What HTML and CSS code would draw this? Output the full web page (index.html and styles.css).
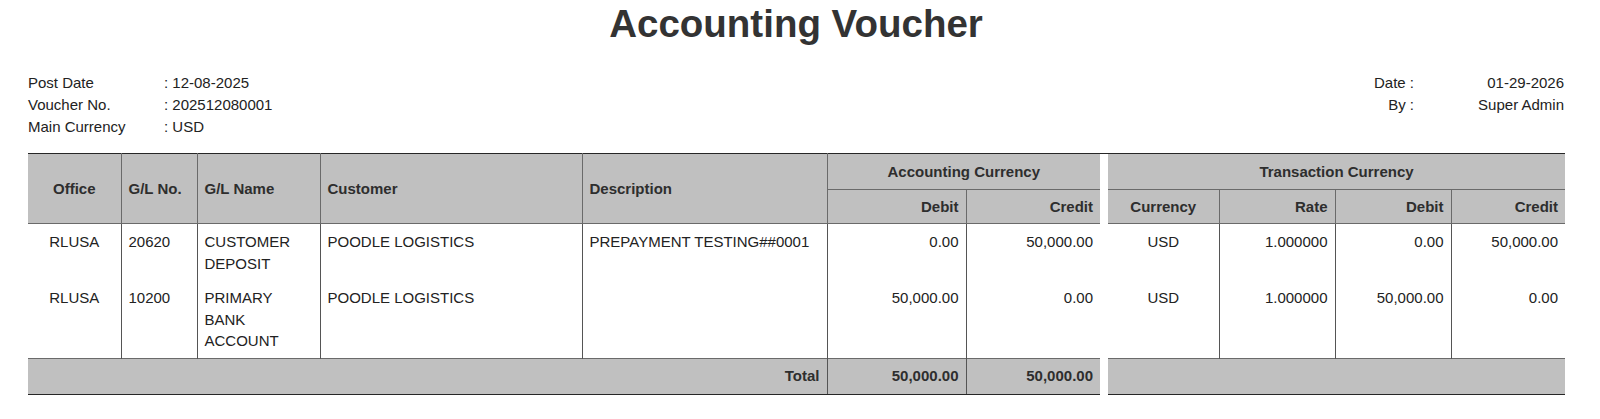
FILE: index.html
```html
<!DOCTYPE html>
<html lang="en">
<head>
<meta charset="utf-8">
<title>Accounting Voucher</title>
<link rel="stylesheet" href="styles.css">
</head>
<body>
<div class="page">
  <h1 class="title">Accounting Voucher</h1>
  <div class="info">
    <div class="info-left">
      <span class="lbl">Post Date</span><span class="val">: 12-08-2025</span>
      <span class="lbl">Voucher No.</span><span class="val">: 202512080001</span>
      <span class="lbl">Main Currency</span><span class="val">: USD</span>
    </div>
    <div class="info-right">
      <span class="rlbl">Date :</span><span class="rval">01-29-2026</span>
      <span class="rlbl">By :</span><span class="rval">Super Admin</span>
    </div>
  </div>
  <table class="voucher">
    <colgroup>
      <col class="c-office"><col class="c-glno"><col class="c-glname"><col class="c-cust"><col class="c-desc"><col class="c-adebit"><col class="c-acredit">
      <col class="c-gap">
      <col class="c-cur"><col class="c-rate"><col class="c-tdebit"><col class="c-tcredit">
    </colgroup>
    <thead>
      <tr class="hrow1">
        <th rowspan="2" class="center">Office</th>
        <th rowspan="2" class="left">G/L No.</th>
        <th rowspan="2" class="left">G/L Name</th>
        <th rowspan="2" class="left">Customer</th>
        <th rowspan="2" class="left">Description</th>
        <th colspan="2" class="center group last">Accounting Currency</th>
        <th rowspan="2" class="gap"></th>
        <th colspan="4" class="center group first last">Transaction Currency</th>
      </tr>
      <tr class="hrow2">
        <th class="right">Debit</th>
        <th class="right last">Credit</th>
        <th class="center first">Currency</th>
        <th class="right">Rate</th>
        <th class="right">Debit</th>
        <th class="right last">Credit</th>
      </tr>
    </thead>
    <tbody>
      <tr>
        <td class="center">RLUSA</td>
        <td>20620</td>
        <td>CUSTOMER<br>DEPOSIT</td>
        <td>POODLE LOGISTICS</td>
        <td>PREPAYMENT TESTING##0001</td>
        <td class="right">0.00</td>
        <td class="right last">50,000.00</td>
        <td class="gap"></td>
        <td class="center first">USD</td>
        <td class="right">1.000000</td>
        <td class="right">0.00</td>
        <td class="right last">50,000.00</td>
      </tr>
      <tr>
        <td class="center">RLUSA</td>
        <td>10200</td>
        <td>PRIMARY<br>BANK<br>ACCOUNT</td>
        <td>POODLE LOGISTICS</td>
        <td></td>
        <td class="right">50,000.00</td>
        <td class="right last">0.00</td>
        <td class="gap"></td>
        <td class="center first">USD</td>
        <td class="right">1.000000</td>
        <td class="right">50,000.00</td>
        <td class="right last">0.00</td>
      </tr>
    </tbody>
    <tfoot>
      <tr>
        <td colspan="5" class="right">Total</td>
        <td class="right">50,000.00</td>
        <td class="right last">50,000.00</td>
        <td class="gap"></td>
        <td colspan="4" class="first last"></td>
      </tr>
    </tfoot>
  </table>
</div>
</body>
</html>
```

FILE: styles.css
```css
html, body {
  margin: 0;
  padding: 0;
  background: #ffffff;
}

body {
  font-family: "Liberation Sans", Arial, sans-serif;
  color: #222222;
  font-size: 15px;
}

.page {
  width: 1536px;
  padding: 2px 0 0 28px;
}

.title {
  margin: 0;
  font-size: 38.5px;
  font-weight: bold;
  color: #333333;
  text-align: center;
  line-height: 43px;
}

.info {
  display: flex;
  justify-content: space-between;
  align-items: flex-start;
  margin-top: 27px;
  line-height: 22px;
}

.info-left {
  display: grid;
  grid-template-columns: 136px auto;
}

.info-right {
  display: grid;
  grid-template-columns: auto 150px;
}

.rlbl,
.rval {
  text-align: right;
}

.voucher {
  margin-top: 15px;
  width: 1537px;
  table-layout: fixed;
  border-collapse: collapse;
  line-height: 21.5px;
}

.c-office { width: 93px; }
.c-glno { width: 76px; }
.c-glname { width: 123px; }
.c-cust { width: 262px; }
.c-desc { width: 245px; }
.c-adebit { width: 139px; }
.c-acredit { width: 134px; }
.c-gap { width: 8px; }
.c-cur { width: 111px; }
.c-rate { width: 116px; }
.c-tdebit { width: 116px; }
.c-tcredit { width: 114px; }

.voucher th {
  background: #c0c0c0;
  color: #2e2e2e;
  font-weight: bold;
  padding: 0 7px;
  border-left: 1px solid #6a6a6a;
  border-right: 1px solid #6a6a6a;
  border-bottom: 1px solid #6a6a6a;
  vertical-align: middle;
}

.voucher .hrow1 th {
  height: 35px;
  border-top: 1px solid #262626;
}

.voucher .hrow2 th {
  height: 33px;
}

.voucher td {
  padding: 7px 7px 6px;
  vertical-align: top;
  border-left: 1px solid #555555;
  border-right: 1px solid #555555;
  color: #222222;
}

.voucher tfoot td {
  background: #c0c0c0;
  font-weight: bold;
  color: #2e2e2e;
  height: 23px;
  padding: 6px 7px;
  vertical-align: middle;
  border-top: 1px solid #6a6a6a;
  border-bottom: 1px solid #262626;
}

.voucher tr > :first-child {
  border-left: none;
}

.voucher .first {
  border-left: none;
}

.voucher .last {
  border-right: none;
}

.voucher .gap,
.voucher tfoot .gap {
  background: #ffffff;
  border: none;
  padding: 0;
}

.left { text-align: left; }
.center { text-align: center; }
.right { text-align: right; }
```
